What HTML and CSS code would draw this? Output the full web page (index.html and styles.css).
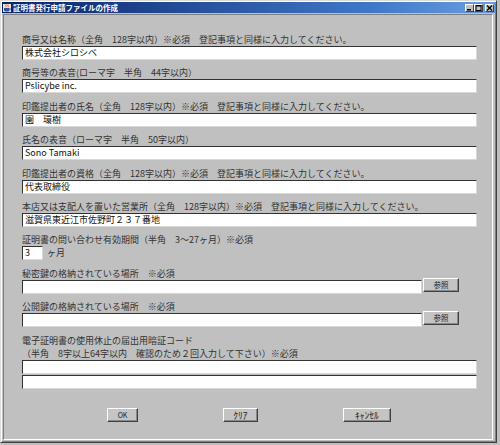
FILE: index.html
```html
<!DOCTYPE html>
<html lang="ja">
<head>
<meta charset="utf-8">
<title>証明書発行申請ファイルの作成</title>
<link rel="stylesheet" href="styles.css">
</head>
<body>
<div class="window">
  <div class="titlebar">
    <svg class="app-icon" width="8" height="8" viewBox="0 0 8 8">
      <rect x="0" y="0" width="8" height="8" fill="#e8e4d8"/>
      <path d="M3 0.5 C2 1.5 4 2 3 3.2 M5 0.5 C4 1.5 6 2 5 3.2" stroke="#d04010" stroke-width="0.8" fill="none"/>
      <path d="M1 4 H6.5 V6 C6.5 7 5.5 7.5 3.8 7.5 C2 7.5 1 7 1 6 Z" fill="#3050a8"/>
      <path d="M6.5 4.6 H7.4 V5.8 H6.5" stroke="#3050a8" stroke-width="0.6" fill="none"/>
    </svg>
    <span class="title">証明書発行申請ファイルの作成</span>
    <div class="winbtns">
      <span class="wbtn"><svg width="7" height="6" viewBox="0 0 7 6"><rect x="1" y="4" width="4" height="1.5" fill="#000"/></svg></span>
      <span class="wbtn"><svg width="7" height="6" viewBox="0 0 7 6"><rect x="1" y="0.5" width="5" height="5" fill="none" stroke="#000" stroke-width="1"/><rect x="1" y="0" width="5.5" height="1.5" fill="#000"/></svg></span>
      <span class="wbtn wbtn-close"><svg width="7" height="6" viewBox="0 0 7 6"><path d="M1 0.5 L6 5.5 M6 0.5 L1 5.5" stroke="#000" stroke-width="1.2"/></svg></span>
    </div>
  </div>

  <div class="content">
    <div class="row">
      <div class="label">商号又は名称（全角　128字以内）※必須　登記事項と同様に入力してください。</div>
      <div class="field">株式会社シロシベ</div>
    </div>
    <div class="row">
      <div class="label">商号等の表音(ローマ字　半角　44字以内）</div>
      <div class="field">Pslicybe inc.</div>
    </div>
    <div class="row">
      <div class="label">印鑑提出者の氏名（全角　128字以内）※必須　登記事項と同様に入力してください。</div>
      <div class="field">園　環樹</div>
    </div>
    <div class="row">
      <div class="label">氏名の表音（ローマ字　半角　50字以内）</div>
      <div class="field">Sono Tamaki</div>
    </div>
    <div class="row">
      <div class="label">印鑑提出者の資格（全角　128字以内）※必須　登記事項と同様に入力してください。</div>
      <div class="field">代表取締役</div>
    </div>
    <div class="row">
      <div class="label">本店又は支配人を置いた営業所（全角　128字以内）※必須　登記事項と同様に入力してください。</div>
      <div class="field">滋賀県東近江市佐野町２３７番地</div>
    </div>
    <div class="row">
      <div class="label">証明書の問い合わせ有効期間（半角　3～27ヶ月）※必須</div>
      <div class="inline">
        <div class="field field-small">3</div>
        <span class="unit">ヶ月</span>
      </div>
    </div>
    <div class="row">
      <div class="label">秘密鍵の格納されている場所　※必須</div>
      <div class="inline">
        <div class="field field-path"></div>
        <button class="btn btn-browse">参照</button>
      </div>
    </div>
    <div class="row">
      <div class="label">公開鍵の格納されている場所　※必須</div>
      <div class="inline">
        <div class="field field-path"></div>
        <button class="btn btn-browse">参照</button>
      </div>
    </div>
    <div class="row row-last">
      <div class="label">電子証明書の使用休止の届出用暗証コード</div>
      <div class="label label-second">（半角　8字以上64字以内　確認のため２回入力して下さい）※必須</div>
      <div class="field"></div>
      <div class="field field-confirm"></div>
    </div>
    <div class="actions">
      <button class="btn btn-ok">OK</button>
      <button class="btn btn-clear">ｸﾘｱ</button>
      <button class="btn btn-cancel">ｷｬﾝｾﾙ</button>
    </div>
  </div>
</div>
</body>
</html>
```

FILE: styles.css
```css
html, body {
  margin: 0;
  padding: 0;
  background: #c0c0c0;
}

body {
  width: 500px;
  height: 445px;
  overflow: hidden;
  font-family: "Noto Sans CJK JP", "Liberation Sans", sans-serif;
  color: #222;
}

.window {
  box-sizing: border-box;
  width: 497px;
  height: 443px;
  border: 1px solid;
  border-color: #dcdcdc #404040 #404040 #dcdcdc;
  box-shadow: inset 1px 1px #ffffff, inset -1px -1px #808080;
  padding: 1px;
  display: flex;
  flex-direction: column;
  background: #c0c0c0;
}

.titlebar {
  flex: none;
  height: 11px;
  background: linear-gradient(to right, #0a246a, #3f78c8 75%, #6a9ee0);
  display: flex;
  align-items: center;
  padding: 0 1px 0 1px;
}

.app-icon {
  flex: none;
  display: block;
}

.title {
  color: #fff;
  font-weight: bold;
  font-size: 7.5px;
  line-height: 11px;
  margin-left: 2px;
  white-space: nowrap;
}

.winbtns {
  margin-left: auto;
  display: flex;
  align-items: center;
}

.wbtn {
  box-sizing: border-box;
  width: 9px;
  height: 8px;
  background: #c0c0c0;
  border: 1px solid;
  border-color: #fff #404040 #404040 #fff;
  display: flex;
  align-items: center;
  justify-content: center;
  overflow: hidden;
}

.wbtn svg {
  display: block;
}

.wbtn-close {
  margin-left: 2px;
}

.content {
  flex: 1;
  margin: 1px 2px 1px 1px;
  border: 1px solid;
  border-color: #808080 #ffffff #ffffff #808080;
  padding: 19px 15px 0 18px;
  display: flex;
  flex-direction: column;
}

.row {
  margin-bottom: 7.4px;
}

.label {
  font-size: 9px;
  line-height: 12px;
  height: 12px;
  white-space: nowrap;
  color: #333;
}

.label-second {
  line-height: 13px;
  height: 13px;
}

.field {
  box-sizing: border-box;
  width: 455px;
  height: 14px;
  background: #fff;
  border: 1px solid;
  border-color: #333 #d8d8d8 #d8d8d8 #333;
  font-size: 9px;
  line-height: 12px;
  padding-left: 2px;
  white-space: nowrap;
  overflow: hidden;
  color: #111;
}

.field-confirm {
  margin-top: 1px;
}

.inline {
  display: flex;
  align-items: flex-start;
}

.field-small {
  width: 21px;
}

.unit {
  font-size: 9px;
  line-height: 14px;
  margin-left: 4px;
  color: #333;
}

.field-path {
  width: 400px;
}

.btn {
  box-sizing: border-box;
  height: 14px;
  padding: 0;
  margin: 0;
  background: #c4c4c4;
  border: 1px solid;
  border-color: #fff #404040 #404040 #fff;
  box-shadow: inset -1px -1px #888;
  font-family: "Noto Sans CJK JP", "Liberation Sans", sans-serif;
  color: #222;
  line-height: 12px;
}

.btn-browse {
  width: 36px;
  margin-left: 1px;
  margin-top: -2px;
  font-size: 7.5px;
}

.actions {
  display: flex;
  gap: 85px;
  padding-left: 85px;
  margin-top: 12px;
}

.btn-ok {
  width: 31px;
  font-size: 7px;
}

.btn-clear {
  width: 35px;
  font-size: 9.5px;
}

.btn-cancel {
  width: 48px;
  font-size: 9.5px;
}
```
